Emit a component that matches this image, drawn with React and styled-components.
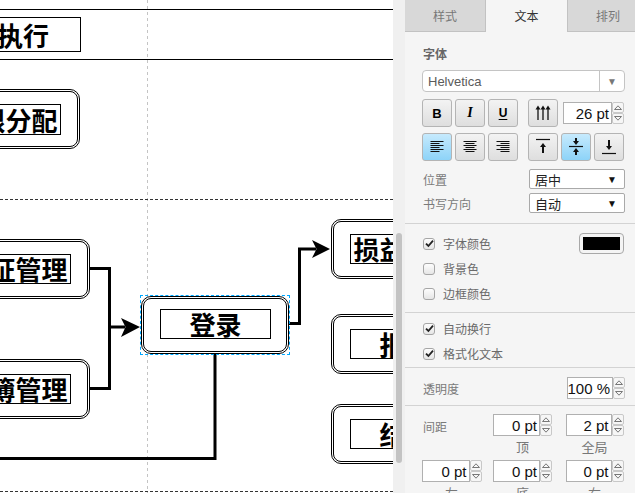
import React from 'react'
import styled, { createGlobalStyle } from 'styled-components'

const GlobalStyle = createGlobalStyle`
  html, body {
    margin: 0;
    padding: 0;
    width: 635px;
    height: 493px;
    overflow: hidden;
    background: #fff;
  }
  body {
    font-family: "Liberation Sans", "Noto Sans CJK SC", sans-serif;
  }
`

const Page = styled.div`
  display: flex;
  width: 635px;
  height: 493px;
  overflow: hidden;
`

/* ---------- diagram canvas ---------- */

const Canvas = styled.div`
  position: relative;
  flex: none;
  width: 393px;
  height: 493px;
  background: #fff;
  overflow: hidden;
`

const Edges = styled.svg`
  position: absolute;
  left: 0;
  top: 0;
`

const Shape = styled.div`
  position: absolute;
  left: ${({ x }) => x}px;
  top: ${({ y }) => y}px;
  width: ${({ w }) => w}px;
  height: ${({ h }) => h || 60}px;
  box-sizing: border-box;
  border: 1px solid #000;
  border-radius: 10px;
  background: #fff;
  &::after {
    content: '';
    position: absolute;
    inset: 1px;
    border: 1px solid #000;
    border-radius: 8px;
  }
`

const Selection = styled.div`
  position: absolute;
  left: ${({ x }) => x}px;
  top: ${({ y }) => y}px;
  width: ${({ w }) => w}px;
  height: ${({ h }) => h}px;
  box-sizing: border-box;
  border: 1px dashed #00a8ff;
`

const Label = styled.div`
  position: absolute;
  left: ${({ x }) => x}px;
  top: ${({ y }) => y}px;
  width: ${({ w }) => w || 111}px;
  height: ${({ h }) => h || 30}px;
  box-sizing: border-box;
  border: 1px solid #000;
  background: #fff;
  display: flex;
  align-items: center;
  justify-content: center;
  white-space: nowrap;
  font-family: "Noto Sans CJK SC", "Liberation Sans", sans-serif;
  font-weight: bold;
  font-size: 26px;
  line-height: 1;
  color: #000;
`

/* ---------- scroll strip ---------- */

const ScrollStrip = styled.div`
  flex: none;
  width: 12px;
  height: 493px;
  background: #f0f0f0;
  padding: 233px 0 0 3px;
  box-sizing: border-box;
`

const Thumb = styled.div`
  width: 6px;
  height: 230px;
  border-radius: 3px;
  background: #c3c3c3;
`

/* ---------- format panel ---------- */

const Panel = styled.div`
  flex: none;
  width: 230px;
  height: 493px;
  background: #f5f5f5;
  overflow: hidden;
  font-size: 12px;
  color: #707070;
`

const Tabs = styled.div`
  display: flex;
  width: 243px;
  height: 32px;
`

const Tab = styled.div`
  flex: none;
  width: 81px;
  box-sizing: border-box;
  display: flex;
  align-items: center;
  justify-content: center;
  font-size: 12px;
  color: ${({ active }) => (active ? '#333' : '#777')};
  background: ${({ active }) => (active ? '#f5f5f5' : '#d8d8d8')};
  border-bottom: 1px solid ${({ active }) => (active ? 'transparent' : '#c2c2c2')};
  border-right: ${({ edge }) => (edge ? '1px solid #c2c2c2' : 'none')};
  border-left: ${({ lead }) => (lead ? '1px solid #c2c2c2' : 'none')};
`

const Section = styled.div`
  padding: ${({ pad }) => pad};
  border-bottom: ${({ last }) => (last ? 'none' : '1px solid #d3d3d3')};
`

const Title = styled.div`
  height: 18px;
  line-height: 18px;
  font-weight: bold;
  color: #666;
  padding-left: 1px;
`

const Select = styled.div`
  display: flex;
  align-items: center;
  box-sizing: border-box;
  width: ${({ w }) => w}px;
  height: ${({ h }) => h}px;
  margin-top: ${({ mt }) => mt || 0}px;
  background: #fff;
  border: 1px solid ${({ soft }) => (soft ? '#c4c4c4' : '#a9a9a9')};
  border-radius: ${({ soft }) => (soft ? 4 : 2)}px;
  font-size: 13px;
  color: ${({ soft }) => (soft ? '#5b5b5b' : '#222')};
  padding-left: 5px;
`

const SelectText = styled.span`
  flex: 1;
`

const Caret = styled.span`
  width: 24px;
  height: 100%;
  display: flex;
  align-items: center;
  justify-content: center;
  font-size: 10px;
  color: ${({ soft }) => (soft ? '#777' : '#111')};
  border-left: ${({ soft }) => (soft ? '1px solid #c4c4c4' : 'none')};
`

const Row = styled.div`
  display: flex;
  align-items: center;
  height: ${({ h }) => h || 28}px;
  margin-top: ${({ mt }) => mt || 0}px;
`

const Group = styled.div`
  display: flex;
  gap: 3px;
  margin-right: ${({ mr }) => mr || 0}px;
`

const Btn = styled.div`
  width: 30px;
  height: 28px;
  box-sizing: border-box;
  display: flex;
  align-items: center;
  justify-content: center;
  border: 1px solid #b4b4b4;
  border-radius: 3px;
  background: ${({ on }) =>
    on ? 'linear-gradient(#c6eafd, #8dd3f8)' : 'linear-gradient(#f3f3f3, #dedede)'};
  color: #000;
  font-size: 12px;
`

const BoldGlyph = styled.span`
  font-family: "Liberation Sans", sans-serif;
  font-weight: bold;
  font-size: 13px;
`

const ItalicGlyph = styled.span`
  font-family: "Liberation Serif", serif;
  font-weight: bold;
  font-style: italic;
  font-size: 14px;
`

const UnderGlyph = styled.span`
  font-family: "Liberation Sans", sans-serif;
  font-weight: bold;
  font-size: 12px;
  text-decoration: underline;
  text-underline-offset: 2px;
`

const Field = styled.div`
  display: flex;
  margin-left: ${({ ml }) => ml || 0}px;
`

const NumBox = styled.div`
  width: ${({ w }) => w || 47}px;
  height: 22px;
  box-sizing: border-box;
  background: #fff;
  border: 1px solid #b0b0b0;
  display: flex;
  align-items: center;
  justify-content: flex-end;
  padding-right: 2px;
  font-size: 15px;
  color: #111;
  white-space: nowrap;
  overflow: hidden;
`

const SpinBox = styled.div`
  width: 12px;
  height: 22px;
  display: flex;
  flex-direction: column;
`

const SpinHalf = styled.div`
  flex: 1;
  display: flex;
  align-items: center;
  justify-content: center;
  box-sizing: border-box;
  border: 1px solid #c8c8c8;
  border-radius: 2px;
  background: #f6f6f6;
`

const Label12 = styled.div`
  width: ${({ w }) => w || 'auto'}px;
  flex: none;
  color: #7a7a7a;
  padding-left: 1px;
  white-space: nowrap;
`

const CheckRow = styled.div`
  display: flex;
  align-items: center;
  height: 25px;
`

const Box = styled.div`
  flex: none;
  width: 12px;
  height: 12px;
  box-sizing: border-box;
  border: 1px solid #a6a6a6;
  border-radius: 3px;
  background: linear-gradient(#fdfdfd, #e6e6e6);
  display: flex;
  align-items: center;
  justify-content: center;
  margin-right: 8px;
`

const CheckText = styled.span`
  flex: 1;
  color: #6a6a6a;
  white-space: nowrap;
`

const Swatch = styled.div`
  flex: none;
  width: 45px;
  height: 21px;
  box-sizing: border-box;
  border: 1px solid #a8a8a8;
  border-radius: 4px;
  background: #f4f4f4;
  padding: 3px;
  &::after {
    content: '';
    display: block;
    height: 100%;
    background: #000;
  }
`

const SpacingGrid = styled.div`
  display: grid;
  grid-template-columns: 71px 72px 60px;
  align-items: center;
`

const SpacingLabel = styled(Label12)`
  align-self: start;
  margin-top: 4px;
`

const Cell = styled.div`
  display: flex;
  flex-direction: column;
  align-items: center;
  width: 59px;
  margin-top: ${({ mt }) => mt || 0}px;
`

const Under = styled.div`
  height: 18px;
  line-height: 18px;
  font-size: 13px;
  color: #777;
  margin-top: 3px;
`

const Spinner = () => (
  <SpinBox>
    <SpinHalf>
      <svg width="8" height="5" viewBox="0 0 8 5">
        <path d="M0.5 4.5 L4 0.8 L7.5 4.5 Z" fill="none" stroke="#777" strokeWidth="1" />
      </svg>
    </SpinHalf>
    <SpinHalf>
      <svg width="8" height="5" viewBox="0 0 8 5">
        <path d="M0.5 0.5 L4 4.2 L7.5 0.5 Z" fill="none" stroke="#777" strokeWidth="1" />
      </svg>
    </SpinHalf>
  </SpinBox>
)

const Num = ({ value, w, ml }) => (
  <Field ml={ml}>
    <NumBox w={w}>{value}</NumBox>
    <Spinner />
  </Field>
)

const Check = ({ on }) => (
  <Box>
    {on && (
      <svg width="9" height="9" viewBox="0 0 9 9">
        <path d="M1 4.6 L3.4 7 L8 1.6" fill="none" stroke="#222" strokeWidth="1.8" />
      </svg>
    )}
  </Box>
)

const AlignIcon = ({ side }) => {
  const rows = [13, 9, 13, 9, 13, 9]
  return (
    <svg width="14" height="12" viewBox="0 0 14 12">
      {rows.map((len, i) => {
        const x = side === 'left' ? 0.5 : side === 'right' ? 13.5 - len : (14 - len) / 2
        return <line key={i} x1={x} x2={x + len} y1={i * 2 + 0.5} y2={i * 2 + 0.5} stroke="#111" strokeWidth="1" />
      })}
    </svg>
  )
}

const UpArrow = ({ x, y1, y2 }) => (
  <g>
    <line x1={x} x2={x} y1={y1 + 3} y2={y2} stroke="#111" strokeWidth="2" />
    <path d={`M${x - 3} ${y1 + 4} L${x} ${y1} L${x + 3} ${y1 + 4} Z`} fill="#111" />
  </g>
)

const DownArrow = ({ x, y1, y2 }) => (
  <g>
    <line x1={x} x2={x} y1={y1} y2={y2 - 3} stroke="#111" strokeWidth="2" />
    <path d={`M${x - 3} ${y2 - 4} L${x} ${y2} L${x + 3} ${y2 - 4} Z`} fill="#111" />
  </g>
)

const LineHeightIcon = () => (
  <svg width="16" height="16" viewBox="0 0 16 16">
    {[3, 8, 13].map((x) => (
      <g key={x}>
        <line x1={x} x2={x} y1="3" y2="15" stroke="#111" strokeWidth="1.3" />
        <path d={`M${x - 2.5} 4.5 L${x} 0.5 L${x + 2.5} 4.5 Z`} fill="#111" />
      </g>
    ))}
  </svg>
)

const VAlignIcon = ({ pos }) => (
  <svg width="16" height="18" viewBox="0 0 16 18">
    {pos === 'top' && (
      <>
        <line x1="1" x2="15" y1="1.5" y2="1.5" stroke="#111" strokeWidth="1.2" />
        <UpArrow x={8} y1={5} y2={15} />
      </>
    )}
    {pos === 'middle' && (
      <>
        <DownArrow x={8} y1={0} y2={7} />
        <line x1="1" x2="15" y1="8.5" y2="8.5" stroke="#111" strokeWidth="1.2" />
        <UpArrow x={8} y1={10} y2={17} />
      </>
    )}
    {pos === 'bottom' && (
      <>
        <DownArrow x={8} y1={2} y2={12} />
        <line x1="1" x2="15" y1="15.5" y2="15.5" stroke="#111" strokeWidth="1.2" />
      </>
    )}
  </svg>
)

const App = () => {
  return (
    <>
      <GlobalStyle />
      <Page>
        <Canvas>
          <Edges width="393" height="493" viewBox="0 0 393 493">
            <line x1="147.5" x2="147.5" y1="0" y2="493" stroke="#c4c4c4" strokeDasharray="3 3" />
            <line x1="0" x2="393" y1="9.5" y2="9.5" stroke="#000" />
            <line x1="0" x2="393" y1="59.5" y2="59.5" stroke="#000" />
            <line x1="0" x2="393" y1="199.5" y2="199.5" stroke="#333" strokeDasharray="3 2" />
            <line x1="0" x2="393" y1="491.5" y2="491.5" stroke="#333" strokeDasharray="3 2" />
            <path d="M90 268.5 H109.5 V388.5 H90" fill="none" stroke="#000" strokeWidth="3" />
            <path d="M109.5 327 H125" fill="none" stroke="#000" strokeWidth="3" />
            <path d="M140 327 L121 318 L125.5 327 L121 337 Z" fill="#000" />
            <path d="M289 323.5 H299.5 V249 H316" fill="none" stroke="#000" strokeWidth="3" />
            <path d="M330 249 L312 240 L316.5 249 L312 258 Z" fill="#000" />
            <path d="M215 354 V458.5 H0" fill="none" stroke="#000" strokeWidth="3" />
          </Edges>

          <Label x={-87} y={17} w={168} h={35}>计划执行</Label>

          <Shape x={-70} y={89} w={150} />
          <Label x={-50} y={104} h={31}>权限分配</Label>

          <Shape x={-60} y={239} w={150} />
          <Label x={-40} y={254}>凭证管理</Label>

          <Shape x={-60} y={359} w={150} />
          <Label x={-40} y={374}>账簿管理</Label>

          <Shape x={141} y={296} w={148} h={58} />
          <Label x={160} y={309}>登录</Label>
          <Selection x={140} y={295} w={150} h={60} />

          <Shape x={331} y={219} w={150} />
          <Label x={350} y={234}>损益查询</Label>

          <Shape x={331} y={314} w={150} />
          <Label x={350} y={329}>报表</Label>

          <Shape x={331} y={404} w={150} />
          <Label x={350} y={419}>结账</Label>
        </Canvas>

        <ScrollStrip>
          <Thumb />
        </ScrollStrip>

        <Panel>
          <Tabs>
            <Tab edge>样式</Tab>
            <Tab active>文本</Tab>
            <Tab lead>排列</Tab>
          </Tabs>

          <Section pad="14px 0 10px 17px">
            <Title>字体</Title>
            <Select w={203} h={22} mt={6} soft>
              <SelectText>Helvetica</SelectText>
              <Caret soft>▼</Caret>
            </Select>
            <Row mt={7}>
              <Group mr={10}>
                <Btn><BoldGlyph>B</BoldGlyph></Btn>
                <Btn><ItalicGlyph>I</ItalicGlyph></Btn>
                <Btn><UnderGlyph>U</UnderGlyph></Btn>
              </Group>
              <Btn><LineHeightIcon /></Btn>
              <Num value="26 pt" w={49} ml={5} />
            </Row>
            <Row mt={6}>
              <Group mr={10}>
                <Btn on><AlignIcon side="left" /></Btn>
                <Btn><AlignIcon side="center" /></Btn>
                <Btn><AlignIcon side="right" /></Btn>
              </Group>
              <Group>
                <Btn><VAlignIcon pos="top" /></Btn>
                <Btn on><VAlignIcon pos="middle" /></Btn>
                <Btn><VAlignIcon pos="bottom" /></Btn>
              </Group>
            </Row>
            <Row h={20} mt={8}>
              <Label12 w={106}>位置</Label12>
              <Select w={96} h={20}>
                <SelectText>居中</SelectText>
                <Caret>▼</Caret>
              </Select>
            </Row>
            <Row h={20} mt={4}>
              <Label12 w={106}>书写方向</Label12>
              <Select w={96} h={20}>
                <SelectText>自动</SelectText>
                <Caret>▼</Caret>
              </Select>
            </Row>
          </Section>

          <Section pad="7px 11px 6px 18px">
            <CheckRow>
              <Check on />
              <CheckText>字体颜色</CheckText>
              <Swatch />
            </CheckRow>
            <CheckRow>
              <Check />
              <CheckText>背景色</CheckText>
            </CheckRow>
            <CheckRow>
              <Check />
              <CheckText>边框颜色</CheckText>
            </CheckRow>
          </Section>

          <Section pad="3px 11px 1px 18px">
            <CheckRow>
              <Check on />
              <CheckText>自动换行</CheckText>
            </CheckRow>
            <CheckRow>
              <Check on />
              <CheckText>格式化文本</CheckText>
            </CheckRow>
          </Section>

          <Section pad="9px 0 6px 17px">
            <Row h={22}>
              <Label12 w={144}>透明度</Label12>
              <Num value="100 %" w={46} />
            </Row>
          </Section>

          <Section pad="8px 0 0 17px" last>
            <SpacingGrid>
              <SpacingLabel>间距</SpacingLabel>
              <Cell>
                <Num value="0 pt" />
                <Under>顶</Under>
              </Cell>
              <Cell>
                <Num value="2 pt" w={46} />
                <Under>全局</Under>
              </Cell>
              <Cell mt={3}>
                <Num value="0 pt" w={48} />
                <Under>左</Under>
              </Cell>
              <Cell mt={3}>
                <Num value="0 pt" />
                <Under>底</Under>
              </Cell>
              <Cell mt={3}>
                <Num value="0 pt" w={46} />
                <Under>右</Under>
              </Cell>
            </SpacingGrid>
          </Section>
        </Panel>
      </Page>
    </>
  )
}

export default App
